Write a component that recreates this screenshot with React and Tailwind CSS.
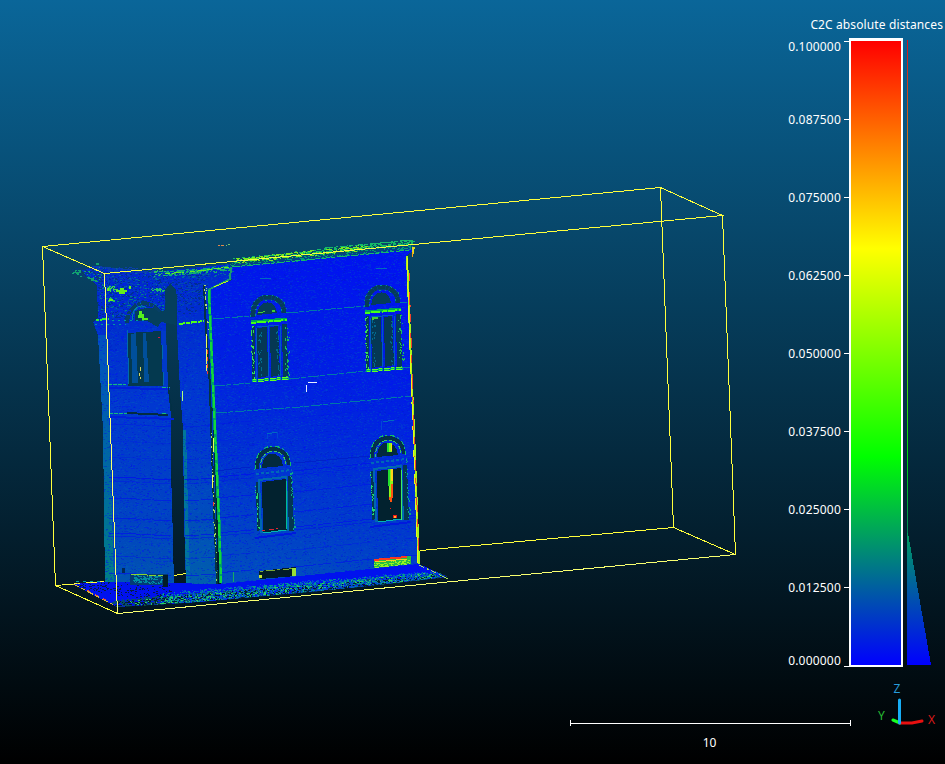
import React from "react";

const BOX = [
  "42,246 660,187 722,215 104,273 42,246 55,585 117,613 104,273",
  "117,613 735,554 722,215",
  "735,554 673,527 660,187",
  "55,585 104,581",
  "173,575 186,573",
  "420,550 673,527",
];

const FACADE = "208,290 232,280 232,265 412,247 413,251 407,255 409,310 413,430 419,564 419,570 221,588 214,430";
const TOWER = "80,270 97,266 153,272 230,264 233,278 208,290 211,363 218,586 186,586 184,520 183,430 180,390 177,330 177,295 172,286 165,290 166,330 168,390 171,415 171,470 173,540 174,586 105,584 103,430 100,370 98,335 93,322 98,318 97,285 88,277";
const GROUND = "72,584 105,582 221,584 419,564 448,577 340,589 200,602 117,607";

// Small deterministic generator so the cloud is identical on every render.
function generator(seed) {
  let s = seed;
  return () => {
    s = (s * 1664525 + 1013904223) % 4294967296;
    return s / 4294967296;
  };
}

function scatter(seed, count, x0, x1, yTop, yBottom, maxLen = 2) {
  const rnd = generator(seed);
  let d = "";
  for (let i = 0; i < count; i++) {
    const t = rnd();
    const x = Math.round(x0 + (x1 - x0) * t);
    const a = yTop[0] + (yTop[1] - yTop[0]) * t;
    const b = yBottom[0] + (yBottom[1] - yBottom[0]) * t;
    const y = Math.round(a + (b - a) * rnd());
    const w = 1 + Math.floor(rnd() * maxLen);
    d += `M${x} ${y}h${w}v1h-${w}z`;
  }
  return d;
}

// Points scattered in a narrow vertical strip that leans with the facade.
function strip(seed, count, x0, y0, x1, y1, width) {
  const rnd = generator(seed);
  let d = "";
  for (let i = 0; i < count; i++) {
    const t = rnd();
    const x = Math.round(x0 + (x1 - x0) * t + (rnd() - 0.5) * width);
    const y = Math.round(y0 + (y1 - y0) * t);
    d += `M${x} ${y}h1v${rnd() > 0.5 ? 2 : 1}h-1z`;
  }
  return d;
}

const NOISE = [
  [11, 9000, "#0050c8", 0.32],
  [23, 7000, "#0008ff", 0.35],
  [37, 5000, "#0070b8", 0.22],
  [41, 3500, "#0018c8", 0.4],
].map(([seed, n, color, opacity]) => ({ color, opacity, d: scatter(seed, n, 76, 420, [262, 240], [590, 580]) }));

const COURSES = [
  [424, 0.5], [441, 0.3], [457, 0.35], [477, 0.9], [481, 0.5], [498, 0.7],
  [518, 0.7], [533, 0.8], [536, 0.6], [556, 0.4], [573, 0.7],
];

function Courses() {
  return (
    <g stroke="#0018e6" fill="none">
      {COURSES.map(([y, o]) => (
        <g key={y} opacity={o}>
          <path d={`M109 ${y}L136 ${y + 1}L171 ${y + 3}`} strokeDasharray="31 2 9 1" />
          <path d={`M185 ${y + 3}L216 ${y + 1}`} strokeDasharray="14 2" />
          <path d={`M217 ${y}L262 ${y - 4}M294 ${y - 6}L372 ${y - 14}M405 ${y - 17}L417 ${y - 18}`} strokeDasharray="22 2 13 5" />
        </g>
      ))}
    </g>
  );
}

function UpperWindow({ x, y, seed }) {
  return (
    <g transform={`translate(${x} ${y})`}>
      <path d="M3 22C2 8 10 2 18 2C27 2 34 8 34 18" fill="none" stroke="#063c78" strokeWidth="5" />
      <path d="M3 22C2 8 10 2 18 2C27 2 34 8 34 18" fill="none" stroke="#053d58" strokeWidth="4" strokeDasharray="7 1 3 1" />
      <path d="M0 22C0 7 8 0 18 0C29 0 37 7 37 18M5 21C5 12 10 6 18 5C26 5 31 10 32 17" fill="none" stroke="#008f91" strokeDasharray="2 4 1 3" />
      <path d="M7 20C8 4 26 3 27 18Z" fill="#053d59" />
      <path d="M1 27L37 24" stroke="#00a85b" strokeWidth="3" />
      <path d="M1 28L37 25" stroke="#44ff16" strokeWidth="2" strokeDasharray="5 1 9 2" />
      <path d="M2 31H5V85H2ZM32 29H37L38 83H33Z" fill="#043a5c" />
      <path d="M7 33L17 32L18 81L8 83ZM20 32L28 31L30 80L21 82Z" fill="#053854" />
      <path d="M6 32L7 84M18.5 31V82M30 30L31 81M7 32L29 30" stroke="#005cc0" fill="none" />
      <path d={strip(seed, 38, 2, 31, 3, 83, 3)} fill="#38df53" />
      <path d={strip(seed + 1, 32, 36, 29, 38, 82, 5)} fill="#18bf5c" />
      <path d={strip(seed + 2, 24, 9, 34, 10, 80, 3)} fill="#026a8c" />
      <path d={strip(seed + 3, 24, 27, 33, 28, 80, 3)} fill="#026a8c" />
      <path d="M2 86L39 83" stroke="#00b469" strokeWidth="3" strokeDasharray="5 1" />
      <path d="M3 85L38 82M3 87L39 84" stroke="#65ff21" strokeDasharray="3 2 6 1" />
    </g>
  );
}

function LowerWindow({ x, y, seed }) {
  return (
    <g transform={`translate(${x} ${y})`}>
      <path d="M3 23C3 8 11 3 19 3C28 3 34 9 35 19" fill="none" stroke="#03304a" strokeWidth="4" />
      <path d="M1 24C1 7 9 1 18 0C29 0 36 7 37 20" fill="none" stroke="#12bd66" strokeDasharray="5 2 2 3" />
      <path d="M6 22C7 10 12 6 19 5C26 5 31 10 32 18" fill="none" stroke="#36c861" strokeDasharray="3 2 5 2" />
      <path d="M8 22C8 3 27 3 29 20Z" fill="#032a3e" />
      <path d="M2 28L38 24" stroke="#0068b8" strokeWidth="2" strokeDasharray="3 2" />
      <path d="M2 36H6L7 84L3 85ZM34 30H38L40 85H34Z" fill="#033652" />
      <path d="M5 34L7 86L34 84L32 31Z" fill="none" stroke="#0068b0" strokeWidth="2" />
      <path d="M8 36L32 33L33 84L9 87Z" fill="#02222f" />
      <path d="M9 87L32 84" stroke="#00b4b4" />
      <path d="M32 34L33 83" stroke="#00bd94" />
      <path d={strip(seed, 25, 2, 37, 4, 83, 2)} fill="#25db68" />
      <path d={strip(seed + 1, 25, 37, 24, 40, 84, 3)} fill="#0aaa87" />
      <path d="M1 92L42 87" stroke="#0019dd" strokeWidth="2" />
    </g>
  );
}

function Scene() {
  return (
    <svg className="block h-[670px] w-[780px] shrink-0" viewBox="0 0 780 670" shapeRendering="crispEdges" role="img" aria-label="Point cloud of a facade">
      <defs>
        <linearGradient id="facade" gradientUnits="userSpaceOnUse" x1="370" y1="250" x2="270" y2="590">
          <stop offset="0" stopColor="#0013f0" />
          <stop offset=".4" stopColor="#0020e2" />
          <stop offset=".75" stopColor="#003acc" />
          <stop offset="1" stopColor="#0050bc" />
        </linearGradient>
        <linearGradient id="tower" gradientUnits="userSpaceOnUse" x1="0" y1="260" x2="0" y2="585">
          <stop offset="0" stopColor="#0028cc" />
          <stop offset=".45" stopColor="#0038d0" />
          <stop offset=".8" stopColor="#0044c2" />
          <stop offset="1" stopColor="#0055b0" />
        </linearGradient>
        <linearGradient id="side" x1="0" y1="0" x2="0" y2="1">
          <stop offset="0" stopColor="#0050c0" />
          <stop offset="1" stopColor="#007f86" />
        </linearGradient>
        <linearGradient id="pillar" x1="0" y1="0" x2="0" y2="1">
          <stop offset="0" stopColor="#006aa8" stopOpacity="0" />
          <stop offset="1" stopColor="#006aa8" stopOpacity=".5" />
        </linearGradient>
        <clipPath id="walls">
          <polygon points={FACADE} />
          <polygon points={TOWER} />
        </clipPath>
        <clipPath id="ground"><polygon points={GROUND} /></clipPath>
      </defs>

      <g fill="none" stroke="#ffff3c" transform="translate(.5 .5)">
        {BOX.map((p) => <polyline key={p} points={p} />)}
      </g>

      <polygon points={TOWER} fill="url(#tower)" />
      <polygon points={FACADE} fill="url(#facade)" />
      <path d="M98 335L107 335L114 584H105L103 430Z" fill="url(#side)" />
      <path d="M183 430H186L190 585H186Z" fill="#00779a" />
      <path d="M186 450H215L217 585H187Z" fill="url(#pillar)" />
      <g clipPath="url(#walls)">
        {NOISE.map((n) => <path key={n.color} d={n.d} fill={n.color} opacity={n.opacity} />)}
        <Courses />
        <path d={scatter(81, 600, 97, 210, [264, 260], [320, 300])} fill="#005fa0" opacity=".6" />
        <path d={scatter(87, 650, 97, 206, [266, 266], [320, 312])} fill="#002f80" opacity=".75" />
        <path d={scatter(88, 150, 80, 232, [266, 262], [282, 276])} fill="#007f90" opacity=".8" />
        <path d={scatter(89, 220, 98, 165, [283, 283], [316, 312])} fill="#0020e0" />
        <path d={scatter(90, 90, 98, 165, [283, 283], [318, 312])} fill="#00808c" />
      </g>

      {/* Tower cornice, arch and balcony */}
      <path d={scatter(51, 130, 72, 104, [268, 265], [273, 284])} fill="#073c78" />
      <path d={scatter(58, 110, 92, 155, [265, 269], [270, 273], 3)} fill="#0a3fae" />
      <path d={scatter(52, 25, 72, 102, [269, 265], [273, 284])} fill="#10a477" />
      <path d="M73 272h2v-2h1v2h3v-2h2v3h-2v1h-3v-1h-3zM87 277h3v1h4v2h3v2h-2v-1h-4v-2h-3zM96 263h3v2h-3z" fill="#12a06c" />
      <path d={scatter(53, 34, 107, 116, [286, 286], [291, 291])} fill="#36d451" />
      <path d={scatter(57, 18, 107, 114, [297, 297], [303, 301])} fill="#26c451" />
      <path d={scatter(54, 26, 151, 164, [288, 288], [292, 291])} fill="#22be65" />
      <path d={scatter(56, 22, 153, 164, [270, 269], [276, 275])} fill="#22be65" />
      <path d="M116 290h4v-2h4v2h3v2h-2v2h-6v-2h-3zM107 288h2v3h-2zM109 299h4v2h-4zM129 286h2v3h-2z" fill="#66f01c" />
      <path d="M127 323C128 300 154 295 163 319" fill="none" stroke="#063f66" strokeWidth="4" strokeDasharray="8 1 3 1" />
      <path d="M132 320C133 304 143 304 147 309" fill="none" stroke="#0086a1" strokeWidth="1" />
      <path d="M142 309Q153 305 158 312L166 310L165 290L170 284L176 290L176 325L161 322L158 327L147 321H135V311Z" fill="#053f5c" />
      <path d="M139 311h3v3h2v4h4v2h-6v-2h-4v-3h1z" fill="#55ef1e" />
      <path d="M128 333L161 331L163 386H128Z" fill="#04394f" />
      <path d="M131 334L136 333L138 383H132ZM143 333H146L149 382H144Z" fill="#004f9b" />
      <path d="M127 330L129 384M162 332L164 385" stroke="#0068b0" fill="none" />
      <path d="M162 331L166 331L168 386H164Z" fill="#003ac8" />
      <path d="M140 367h1v4h-1zM139 373h1v3h-1zM140 377h1v2h-1z" fill="#d4d45f" />
      <path d="M158 337h2v1h-2z" fill="#cf1840" />
      <path d="M96 320L109 319" stroke="#36ef2d" strokeWidth="2" strokeDasharray="3 1 6 2" />
      <path d="M112 320L146 321M95 325L126 324" stroke="#0098a0" strokeDasharray="2 4" />
      <path d="M179 324L204 321" stroke="#51ff19" strokeWidth="2" strokeDasharray="6 1 4 1" />
      <path d="M108 385L126 384M109 413L127 413M162 387L170 387M162 413L166 413" stroke="#16b87f" strokeDasharray="4 1" />
      <path d="M127 413L168 415" stroke="#022c42" strokeWidth="2" />
      <path d="M109 388L170 389M109 417L175 419" stroke="#001fda" strokeWidth="2" />
      <path d="M168 387L172 410L175 414L174 422L171 424" stroke="#023044" fill="none" />

      {/* Facade string courses */}
      <path d="M213 319L250 316M287 313L365 306M400 303L407 302M214 386L252 383M289 379L366 371M403 368L410 367M216 413L300 407L411 396" fill="none" stroke="#0078a8" strokeDasharray="11 1 5 2" />
      <path d="M215 471L250 467M294 463L370 456" stroke="#0022c8" />
      <path d="M260 279L271 278M376 268L387 268M267 434L278 432M383 422L394 420" stroke="#006bc0" strokeWidth="1" />
      <path d="M267 434V439M277 432V438M381 421V430" stroke="#0047d5" />

      <UpperWindow x={250} y={295} seed={101} />
      <UpperWindow x={364} y={285} seed={111} />
      <path d="M258 312h5v-1h2v1h-2v1h-5zM272 310h3v2h-3zM372 317h6v2h-4v1h-2z" fill="#43cd34" />
      <LowerWindow x={254} y={446} seed={121} />
      <LowerWindow x={369} y={435} seed={131} />
      <path d="M262 530h3M269 529h5M276 528h2" stroke="#d72632" fill="none" />
      <path d="M387 443h5v9h-5zM388 469h5v17l-1 12h-3z" fill="#8cf719" />
      <path d="M387 443h2v9h-2zM388 469h2v17h-2z" fill="#23df2e" />
      <path d="M391 444h1v7h-1zM391 469h2v12h-2z" fill="#ffd31a" />
      <path d="M391 484h2v10l-1 8h-2l-1-5h2z" fill="#ff5510" />
      <path d="M390 508h1v1h-1zM393 515h4v3h-4z" fill="#f51914" />
      <path d="M394 516h2v2h-2z" fill="#ffb02c" />
      <path d="M401 469L402 520" stroke="#40ed60" />

      {/* Roof line */}
      <path d="M231 262L413 244V249L232 267Z" fill="#044874" opacity=".8" />
      <path d={scatter(61, 240, 230, 412, [262, 242], [267, 250])} fill="#009c77" />
      <path d={scatter(62, 260, 233, 412, [258, 239], [263, 243], 3)} fill="#12bb66" />
      <path d={scatter(63, 150, 235, 365, [258, 244], [263, 250], 4)} fill="#7ee81d" />
      <path d="M325 248L413 240M232 267L410 250" fill="none" stroke="#16b969" strokeDasharray="8 1 4 2" />
      <path d={scatter(64, 140, 165, 231, [271, 265], [276, 270], 3)} fill="#12ad73" />
      <path d="M165 274L184 272M190 272L229 267" stroke="#64ec21" strokeDasharray="5 2 9 1" />
      <path d="M104.5 273.5L413 244.5" stroke="#f4ff3c" />

      {/* Down pipe and the recess beside it */}
      <path d="M204 285L206 330L209 365L211 420L213 480L217 584" stroke="#033343" strokeWidth="2" fill="none" />
      <path d="M231 267L230 279L208 290" stroke="#1a9c70" strokeWidth="2" fill="none" />
      <path d="M228 281L214 287" stroke="#bdf81c" />
      <path d="M209 290L212 363L215 430L219 520L221 583" stroke="#009c68" strokeWidth="3" fill="none" />
      <path d="M209 290L212 363L215 430L219 520L221 583" stroke="#12d83c" strokeWidth="2" fill="none" strokeDasharray="14 3 7 2" />
      <path d="M206 333L207 371M213 438V452M212 475V488" stroke="#ecf958" strokeDasharray="15 1" />
      <path d="M207 350L208 374M213 502V510" stroke="#f33a34" strokeDasharray="4 3" />
      <path d={strip(67, 16, 205, 285, 208, 335, 2)} fill="#b5dd78" />
      <path d={strip(68, 32, 211, 430, 216, 580, 2)} fill="#a5df58" />
      <path d="M182 391L183 401" stroke="#b0ff77" />
      <path d="M233 572V582" stroke="#16ab63" />

      {/* Right edge */}
      <path d="M407 256L409 310L411 363L414 430L419 564" fill="none" stroke="#a8f51c" strokeWidth="2" />
      <path d="M409 273L412 370L415 460L419 550" fill="none" stroke="#f3432a" strokeDasharray="8 11 15 7" />
      <path d="M407 258L410 350L413 430L418 563" fill="none" stroke="#e9f61a" strokeDasharray="18 6" />
      <path d="M412 247h3v2h-1v5h-2z" fill="#dddb25" />
      <path d="M412 252V257" stroke="#fa9b18" />

      {/* Pavement */}
      <polygon points={GROUND} fill="#0012ee" />
      <g clipPath="url(#ground)">
        <path d={scatter(71, 180, 72, 172, [581, 580], [587, 604])} fill="#031d44" />
        <path d={scatter(72, 1300, 112, 446, [600, 572], [608, 581], 3)} fill="#064b70" />
        <path d={scatter(73, 1100, 160, 446, [593, 570], [605, 580])} fill="#009494" />
        <path d={scatter(74, 700, 115, 446, [601, 573], [608, 580])} fill="#031c33" />
        <path d={scatter(75, 340, 130, 446, [600, 571], [607, 580])} fill="#28cc63" />
        <path d={scatter(76, 850, 180, 440, [590, 570], [606, 579])} fill="#004fcf" />
      </g>
      <path d="M73 584L114 605" stroke="#d4b73c" strokeDasharray="7 2 4 3" />
      <path d="M87 590L111 603" stroke="#ed4938" strokeDasharray="3 6" />
      <path d="M419 565L440 575L448 579" fill="none" stroke="#a5e554" strokeDasharray="6 3 2 2" />
      <path d="M76 582L104 581" stroke="#00a2a2" strokeDasharray="3 4" />
      <path d="M130 574H168V585H130Z" fill="#033b75" />
      <path d={scatter(91, 100, 133, 162, [575, 576], [582, 584])} fill="#008ca3" />
      <path d="M131 574L163 576" stroke="#8ad530" strokeDasharray="17 1 7 2" />
      <path d="M163 575h5v12h-5z" fill="#021c27" />
      <path d="M122 568h3v5h-3z" fill="#022855" />

      {/* Basement openings */}
      <path d="M259 571L296 567V576L260 579Z" fill="#021c27" />
      <path d="M260 571.5L295 568.5" fill="none" stroke="#78a532" strokeDasharray="3 3 9 2" />
      <path d="M259 575h3v3h-3z" fill="#c8e532" />
      <path d="M292 568h4v8h-4z" fill="#99df35" />
      <path d="M374 561L411 556V564L374 568Z" fill="#28bd43" />
      <path d="M374 560L407 557" stroke="#fb3920" strokeWidth="2" />
      <path d="M375 562L407 559" stroke="#f5d51c" />
      <path d={scatter(95, 65, 374, 410, [563, 559], [568, 564])} fill="#93f322" />

      {/* Box edges in front of the cloud */}
      <g transform="translate(.5 .5)" fill="none">
        <path d="M104 273L117 613L735 554" stroke="#f8ff70" />
        <path d="M42 246L104 273M55 585L117 613" stroke="#ffff3c" />
      </g>

      {/* Stray points and rotation centre */}
      <path d="M218 245.5h2M221 245.5h3" stroke="#e1874a" />
      <path d="M226 245.5h1M228 244.5h2" stroke="#77c36e" />
      <path d="M308 382.5H317M306.5 385V392" stroke="#e7efff" />
    </svg>
  );
}

const TICKS = ["0.087500", "0.075000", "0.062500", "0.050000", "0.037500", "0.025000", "0.012500"];

function Tick({ children }) {
  return (
    <div className="flex h-[14px] items-center justify-end">
      <span className="mr-[3px] tracking-[0.2px]">{children}</span>
      <span className="mb-[2px] h-px w-[5px] bg-white" />
    </div>
  );
}

function Legend() {
  return (
    <div className="flex h-[670px] w-[165px] flex-col">
      <h1 className="flex h-[38px] items-start justify-end pr-[2px] pt-[18px] font-normal whitespace-nowrap tracking-[0.12px]">C2C absolute distances</h1>
      <div className="flex">
        <div className="flex h-[629px] w-[69px] flex-col pt-[2px]">
          <div className="flex h-[14px] items-start justify-end">
            <span className="mr-[3px] tracking-[0.2px]">0.100000</span>
            <span className="mt-px h-px w-[5px] bg-white" />
          </div>
          <div className="mt-[59px] flex flex-col gap-16">
            {TICKS.map((t) => <Tick key={t}>{t}</Tick>)}
          </div>
          <div className="mt-[59px] flex h-[14px] items-end justify-end">
            <span className="mr-[3px] tracking-[0.2px]">0.000000</span>
            <span className="mb-px h-px w-[5px] bg-white" />
          </div>
        </div>
        <div className="h-[629px] w-[54px] border-2 border-t-3 border-white bg-[linear-gradient(to_bottom,#ff0000_0%,#ffff00_33.3%,#00ff00_66.6%,#0000ff_100%)]" />
        <svg className="ml-[4px] block h-[629px] w-[26px]" viewBox="0 0 26 629" shapeRendering="crispEdges">
          <defs>
            <linearGradient id="histogram" gradientUnits="userSpaceOnUse" x1="0" y1="0" x2="0" y2="627">
              <stop offset="0" stopColor="#ff0000" />
              <stop offset=".333" stopColor="#ffff00" />
              <stop offset=".666" stopColor="#00ff00" />
              <stop offset="1" stopColor="#0000ff" />
            </linearGradient>
          </defs>
          <rect x="0" y="2" width="1" height="494" fill="url(#histogram)" opacity=".8" />
          <path d="M0 495H1L24 627H0Z" fill="url(#histogram)" />
        </svg>
      </div>
    </div>
  );
}

export default function App() {
  return (
    <main className="h-[764px] w-[945px] overflow-hidden bg-[linear-gradient(to_bottom,#0a6699,#000000)] font-['Noto_Sans',sans-serif] text-[12px] leading-[14px] text-white">
      <div className="flex">
        <Scene />
        <Legend />
      </div>
      <div className="flex h-[94px]">
        <div className="ml-[570px] w-[281px] pt-[50px]">
          <div className="flex h-[6px] items-center border-x border-white">
            <div className="h-px w-full bg-white" />
          </div>
          <div className="mt-[10px] pr-[2px] text-center">10</div>
        </div>
        <svg className="ml-[21px] block h-[70px] w-[73px]" viewBox="872 670 73 70" aria-label="Axes">
          <path d="M900 723L893 720" stroke="#16ff24" strokeWidth="3" strokeLinecap="round" />
          <path d="M900 723H912L922 721" fill="none" stroke="#e81010" strokeWidth="3" strokeLinecap="round" />
          <path d="M899.5 723V700" stroke="#17adf5" strokeWidth="3" strokeLinecap="round" />
          <text x="893.5" y="693" fontSize="12" fill="#279bda">Z</text>
          <text x="878" y="720" fontSize="12" fill="#27bd34">Y</text>
          <text x="928" y="724" fontSize="12" fill="#da1919">X</text>
        </svg>
      </div>
    </main>
  );
}
